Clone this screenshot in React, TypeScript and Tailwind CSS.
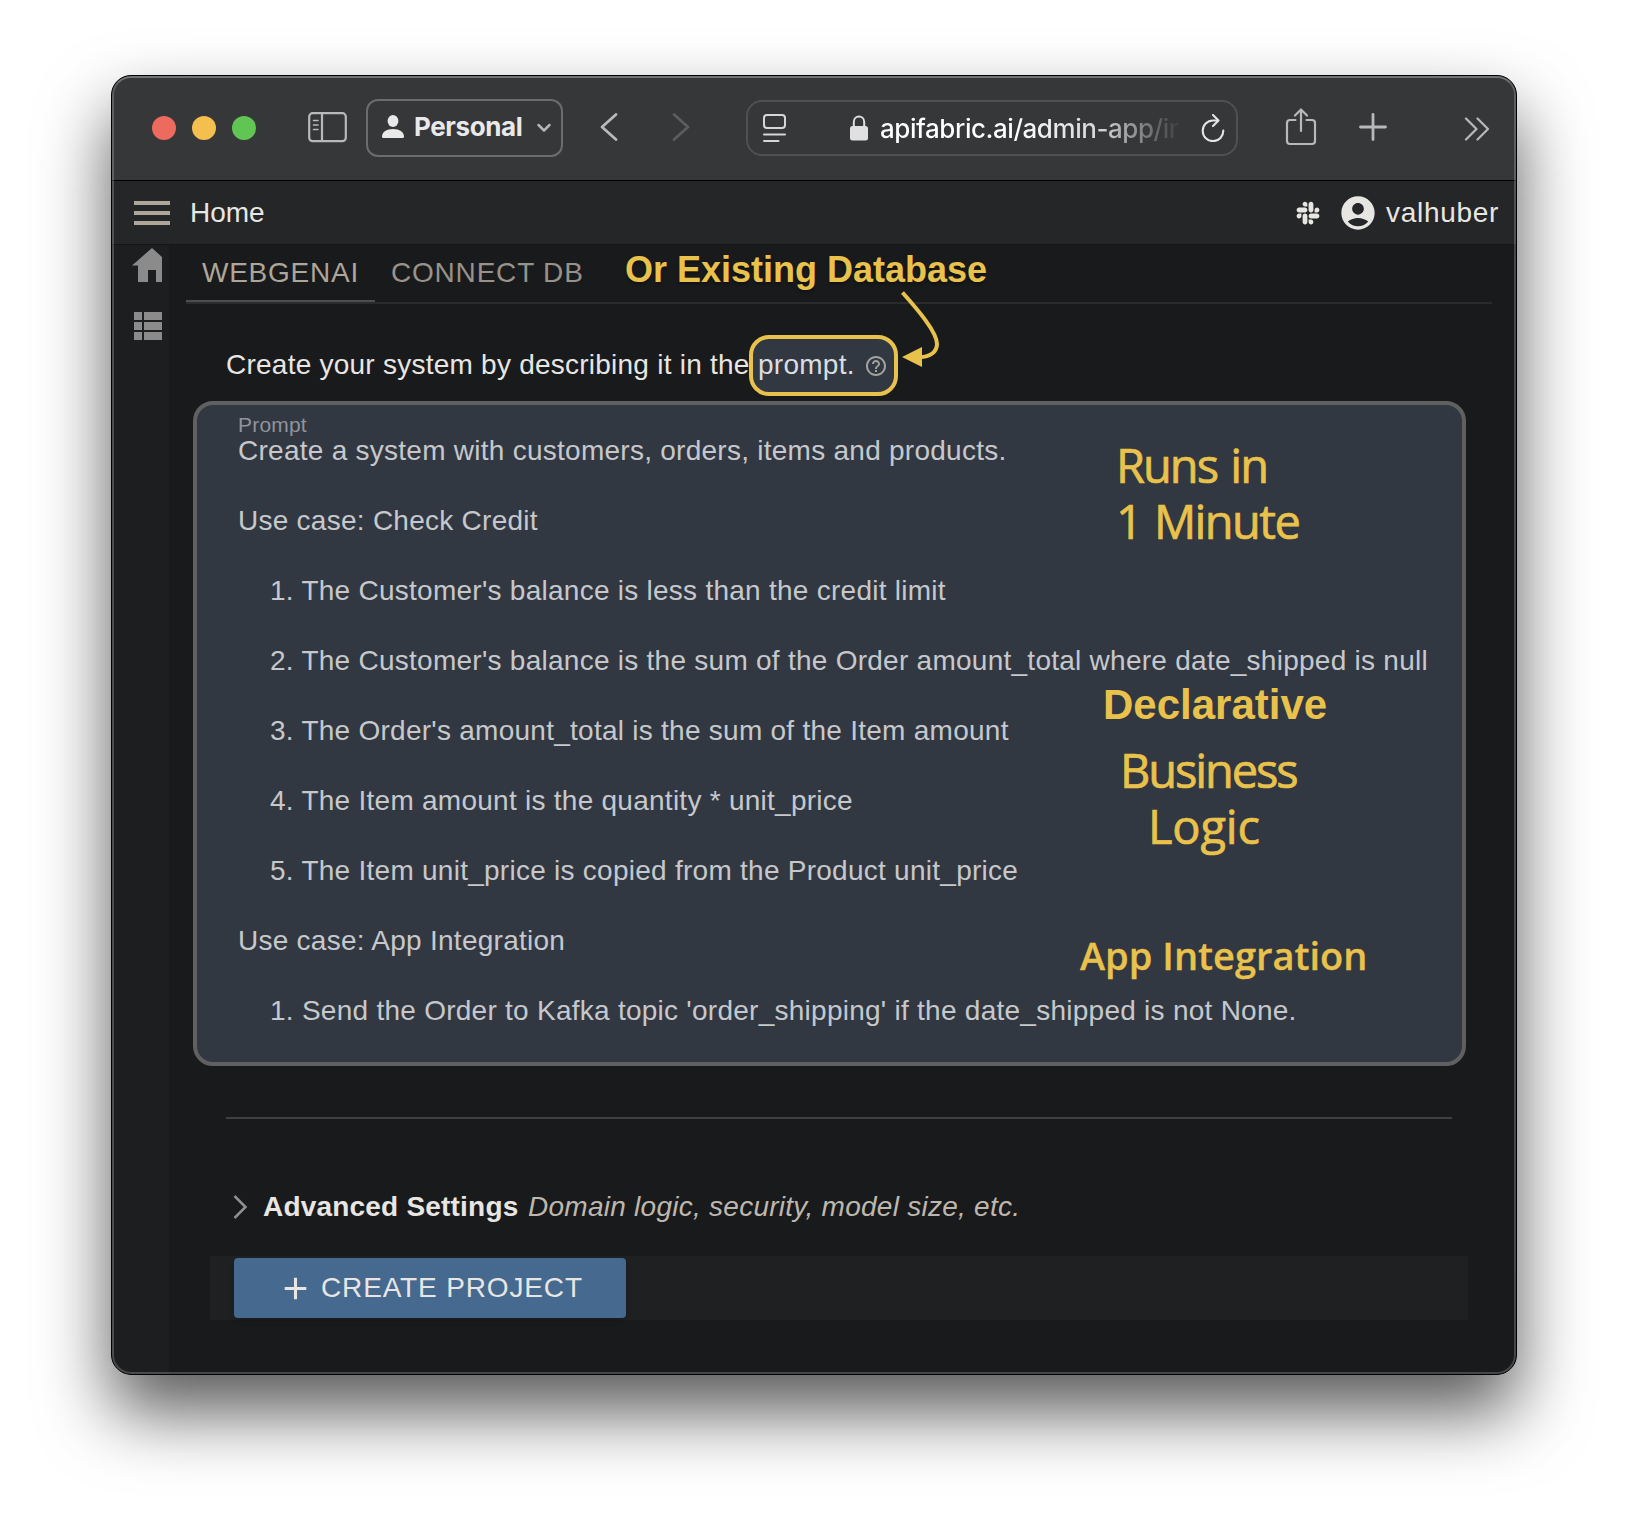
import React from "react";
import { FaSlack } from "react-icons/fa";
import { MdAccountCircle, MdHelpOutline, MdAdd } from "react-icons/md";

const PROMPT: { text: string; indent?: boolean }[] = [
  { text: "Create a system with customers, orders, items and products." },
  { text: "Use case: Check Credit" },
  { text: "1. The Customer's balance is less than the credit limit", indent: true },
  { text: "2. The Customer's balance is the sum of the Order amount_total where date_shipped is null", indent: true },
  { text: "3. The Order's amount_total is the sum of the Item amount", indent: true },
  { text: "4. The Item amount is the quantity * unit_price", indent: true },
  { text: "5. The Item unit_price is copied from the Product unit_price", indent: true },
  { text: "Use case: App Integration" },
  { text: "1. Send the Order to Kafka topic 'order_shipping' if the date_shipped is not None.", indent: true },
];

function SafariToolbar() {
  return (
    <div className="flex h-[105px] shrink-0 items-start border-b border-black bg-[#363739] pl-10">
      <div className="mt-10 flex gap-4">
        <span className="size-6 rounded-full bg-[#ed6a5e]" />
        <span className="size-6 rounded-full bg-[#f5bf4f]" />
        <span className="size-6 rounded-full bg-[#61c554]" />
      </div>
      <svg className="mt-9 ml-[52px] h-[31px] w-[39px] shrink-0" viewBox="0 0 39 31" fill="none" stroke="#b9b9bb" strokeWidth="2.2">
        <rect x="1.2" y="1.2" width="36.6" height="28" rx="3.5" />
        <path d="M14 1v28" />
        <path d="M5.5 8.5H10M5.5 13H10M5.5 17.5H10" strokeWidth="1.6" strokeLinecap="round" />
      </svg>
      <div className="mt-[23px] ml-[19px] flex h-[58px] w-[197px] shrink-0 items-center rounded-xl border-2 border-[#6b6c6e] pl-[14px] text-[#e9e9ea]">
        <svg className="mb-[2px] h-6 w-[22px] shrink-0" viewBox="0 0 22 24" fill="currentColor">
          <ellipse cx="11" cy="6" rx="5.4" ry="6" />
          <path d="M0 21.5C0 17 4.5 14 11 14s11 3 11 7.5c0 1.2-.7 1.5-2 1.5H2c-1.3 0-2-.3-2-1.5z" />
        </svg>
        <span className="mb-[3px] ml-[10px] w-[122px] font-[Inter,sans-serif] text-[26px] font-bold tracking-[-0.4px]">Personal</span>
        <svg className="h-3 w-4 shrink-0" viewBox="0 0 16 12" fill="none" stroke="#b4b4b6" strokeWidth="2.5" strokeLinecap="round" strokeLinejoin="round">
          <path d="M2.5 3l5.500 5.500L13.500 3" />
        </svg>
      </div>
      <svg className="mt-9 ml-[36px] h-[30px] w-5 shrink-0" viewBox="0 0 20 30" fill="none" stroke="#b9b9bb" strokeWidth="2.8" strokeLinecap="round" strokeLinejoin="round">
        <path d="M17 2.500L3 15 17 27.500" />
      </svg>
      <svg className="mt-9 ml-[52px] h-[30px] w-5 shrink-0" viewBox="0 0 20 30" fill="none" stroke="#5c5d5f" strokeWidth="2.8" strokeLinecap="round" strokeLinejoin="round">
        <path d="M3 2.500L17 15 3 27.500" />
      </svg>
      <div className="mt-6 ml-[55px] flex h-14 w-[492px] shrink-0 items-center rounded-[16px] border-2 border-[#4f5052] pl-[15px]">
        <svg className="h-7 w-[23px] shrink-0" viewBox="0 0 23 28" fill="none" stroke="#d6d6d8" strokeWidth="2" strokeLinecap="round">
          <rect x="1" y="1" width="21" height="13" rx="3" />
          <path d="M1 20.500h21M1 27h14.500" />
        </svg>
        <svg className="ml-[64px] h-[26px] w-[18px] shrink-0" viewBox="0 0 18 26" fill="none">
          <path d="M3.800 12V7c0-7.300 10.400-7.300 10.400 0v5" stroke="#e0e0e2" strokeWidth="2" />
          <rect x="0" y="11" width="18" height="14.500" rx="2.500" fill="#e0e0e2" />
        </svg>
        <span className="ml-3 w-[298px] overflow-hidden whitespace-nowrap bg-gradient-to-r from-white from-45% via-[#d4d4d5] via-75% to-[#363739] to-102% bg-clip-text font-[Inter,sans-serif] text-[26px] font-medium tracking-[-0.45px] text-transparent">
          apifabric.ai/admin-app/in
        </span>
        <svg className="ml-[23px] h-7 w-6 shrink-0" viewBox="0 0 24 28" fill="none" stroke="#e4e4e5" strokeWidth="2.1" strokeLinecap="round" strokeLinejoin="round">
          <path d="M17 6.500H12A10.300 10.300 0 1 0 22.300 16.500M12 1l5.500 5.500-5.500 5.500" />
        </svg>
      </div>
      <svg className="mt-8 ml-[47px] h-[38px] w-[32px] shrink-0" viewBox="0 0 32 38" fill="none" stroke="#b9b9bb" strokeWidth="2.2" strokeLinecap="round" strokeLinejoin="round">
        <path d="M10.500 12H5c-2 0-3 1-3 3v18c0 2 1 3 3 3h22c2 0 3-1 3-3V15c0-2-1-3-3-3h-5.500M16 23V2M10 7.500l6-6 6 6" />
      </svg>
      <svg className="mt-[37px] ml-[42px] size-7 shrink-0" viewBox="0 0 28 28" fill="none" stroke="#b9b9bb" strokeWidth="2.8" strokeLinecap="round">
        <path d="M14 1.500v25M1.500 14h25" />
      </svg>
      <svg className="mt-[41px] ml-[77px] h-6 w-[26px] shrink-0" viewBox="0 0 26 24" fill="none" stroke="#b9b9bb" strokeWidth="2.2" strokeLinecap="round" strokeLinejoin="round">
        <path d="M2 1.500L12.500 12 2 22.500M13.500 1.500L24 12 13.500 22.500" />
      </svg>
    </div>
  );
}

function AppBar() {
  return (
    <div className="flex h-16 shrink-0 items-center border-b border-[#151617] bg-[#252628] pl-[22px] text-[28px] text-[#e8e6e3]">
      <div className="flex w-9 flex-col gap-1.5">
        <span className="h-1 bg-[#aea699]" />
        <span className="h-1 bg-[#aea699]" />
        <span className="h-1 bg-[#aea699]" />
      </div>
      <span className="ml-5 flex-1">Home</span>
      <FaSlack className="size-[26px]" />
      <MdAccountCircle className="ml-[17px] size-10" />
      <span className="ml-2 w-[130px] whitespace-nowrap tracking-[0.7px]">valhuber</span>
    </div>
  );
}

function Sidebar() {
  return (
    <div className="flex w-[57px] shrink-0 flex-col bg-[#1d1e20] pl-5">
      <svg className="mt-[3px] h-[34px] w-[30px]" viewBox="0 0 30 34" fill="#8b8b8b">
        <path d="M0 17.500L20 0l10 9v25h-6V22h-8v12H6V17.500z" />
      </svg>
      <svg className="mt-[30px] ml-[2px] h-[28px] w-[28px]" viewBox="0 0 28 28" fill="#8b8b8b">
        <path d="M0 0h8v8H0zM10 0h18v8H10zM0 10h8v8H0zM10 10h18v8H10zM0 20h8v8H0zM10 20h18v8H10z" />
      </svg>
    </div>
  );
}

function Annotations() {
  return (
    <div className="pointer-events-none absolute inset-0 whitespace-nowrap text-[#e9c24c]">
      <div className="absolute top-[169px] left-[514px] text-[36px] leading-[52px] font-bold [text-shadow:0_2px_3px_rgba(0,0,0,0.35)]">Or Existing Database</div>
      <svg className="absolute top-[213px] left-[785px] h-20 w-16" viewBox="0 0 64 80" fill="none">
        <path d="M6.500 4.500C22 22 41 44 41 56 41 64 34 69 24 69" stroke="#e9c24c" strokeWidth="4" />
        <path d="M6 69l20-10v20z" fill="#e9c24c" />
      </svg>
      <div className="absolute top-[362px] left-[1005px] font-['Open_Sans',sans-serif] text-[47px] leading-[56px] [-webkit-text-stroke:0.7px_#e9c24c]">
        <div className="tracking-[-2px] [word-spacing:3px]">Runs in</div>
        <div className="tracking-[-1.6px] [word-spacing:2px]">1 Minute</div>
      </div>
      <div className="absolute top-[603px] left-[992px] text-[42px] leading-[54px] font-bold">Declarative</div>
      <div className="absolute top-[667px] left-[998px] w-[200px] font-['Open_Sans',sans-serif] text-[47px] leading-[56px] [-webkit-text-stroke:0.7px_#e9c24c]">
        <div className="pl-[11px] tracking-[-2.1px]">Business</div>
        <div className="pl-[39px] tracking-[-0.2px]">Logic</div>
      </div>
      <div className="absolute top-[853px] left-[969px] font-['Open_Sans',sans-serif] text-[38px] leading-[54px] font-semibold [-webkit-text-stroke:0.3px_#e9c24c]">App Integration</div>
    </div>
  );
}

export default function App() {
  return (
    <div className="flex h-[1522px] w-[1628px] justify-center overflow-hidden bg-white pt-[75px] font-['Liberation_Sans',Arial,sans-serif]">
      <div className="relative h-[1300px] w-[1406px] rounded-[20px] shadow-[0_37px_70px_rgba(0,0,0,0.65)]">
        <div className="relative flex h-full flex-col overflow-hidden rounded-[20px] border border-black bg-[#191a1c]">
          <SafariToolbar />
          <AppBar />
          <div className="flex flex-1">
            <Sidebar />
            <div className="flex flex-1 flex-col">
              <div className="mr-[24px] ml-[17px] flex h-[59px] border-b-2 border-[#292b2c] text-[28px] whitespace-nowrap text-[#98928a]">
                <div className="h-[57px] w-[189px] border-b-2 border-[#4b4f50] pt-[7px] pl-4 tracking-[0.75px] text-[#aea699]">WEBGENAI</div>
                <div className="pt-[7px] pl-4 tracking-[0.8px]">CONNECT DB</div>
              </div>
              <div className="mt-[31px] ml-[57px] flex h-[61px] items-center text-[28px] whitespace-nowrap text-[#e8e6e3]">
                <span className="w-[523px] pb-px tracking-[0.24px]">Create your system by describing it in the</span>
                <div className="flex h-[61px] w-[149px] items-center rounded-[20px] border-4 border-[#e9c24c] bg-[#323842] pl-[5px]">
                  <span className="w-[106px] pb-px tracking-[0.26px] text-[#dcdde0]">prompt.</span>
                  <MdHelpOutline className="size-6 text-[#a3a29f]" />
                </div>
              </div>
              <div className="mt-[5px] ml-6 h-[665px] w-[1273px] rounded-[20px] border-4 border-[#606060] bg-[#323842] pt-2 pl-[41px] whitespace-nowrap">
                <div className="text-[21px] leading-[24px] tracking-[0.2px] text-[#8f939a]">Prompt</div>
                <div className="-mt-[21px] text-[28px] leading-[70px] tracking-[0.26px] text-[#c6c8cc]">
                  {PROMPT.map((line, i) => (
                    <div key={i} className={line.indent ? "pl-8" : ""}>
                      {line.text}
                    </div>
                  ))}
                </div>
              </div>
              <div className="mt-[51px] ml-[57px] h-0.5 w-[1226px] bg-[#3f413f]" />
              <div className="mt-[68px] ml-[64px] flex h-10 items-center text-[28px] whitespace-nowrap">
                <svg className="h-6 w-[15px]" viewBox="0 0 15 24" fill="none" stroke="#8f8f8f" strokeWidth="2.5">
                  <path d="M1.500 1L12.500 12 1.500 23" />
                </svg>
                <span className="ml-[15px] w-[265px] font-bold tracking-[0.2px] text-[#e8e6e3]">Advanced Settings</span>
                <span className="tracking-[0.26px] text-[#bdb7ae] italic">Domain logic, security, model size, etc.</span>
              </div>
              <div className="mt-[29px] ml-[41px] flex h-16 w-[1258px] items-center bg-[#1f2022] pl-6">
                <div className="flex h-[60px] w-[392px] items-center rounded bg-[#45698f] pl-[43px] text-[28px] whitespace-nowrap text-[#e8e6e3] shadow-md">
                  <MdAdd className="size-[37px]" />
                  <span className="ml-[7px] tracking-[0.85px]">CREATE PROJECT</span>
                </div>
              </div>
            </div>
          </div>
          <div className="pointer-events-none absolute inset-0 rounded-[19px] border-2 border-white/20 border-t-white/30" />
        </div>
        <Annotations />
      </div>
    </div>
  );
}
